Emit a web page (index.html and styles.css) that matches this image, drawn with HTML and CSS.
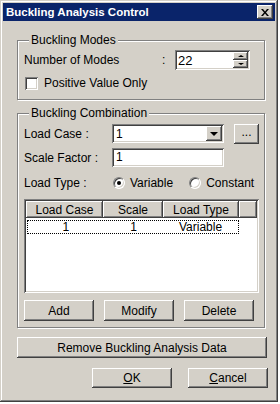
FILE: index.html
```html
<!DOCTYPE html>
<html>

<head>
    <title>Buckling Analysis Control</title>
    <link rel="stylesheet" href="styles.css">
</head>

<body>
    <div class="window">
        <div class="titlebar">
            <span class="title">Buckling Analysis Control</span>
            <div class="close raised">
                <svg width="8" height="7" viewBox="0 0 8 7">
                    <path d="M0 0h2l2 2.5l2-2.5h2l-3 3.5l3 3.5h-2l-2-2.5l-2 2.5h-2l3-3.5z" fill="#000"/>
                </svg>
            </div>
        </div>

        <fieldset class="group modes">
            <legend>Buckling Modes</legend>
            <div class="row modes-row">
                <span class="modes-label">Number of Modes</span>
                <span class="colon">:</span>
                <div class="spin sunken">
                    <span class="spin-value">22</span>
                    <div class="spin-btns">
                        <div class="spin-btn raised"><span class="tri-up"></span></div>
                        <div class="spin-btn raised"><span class="tri-down small"></span></div>
                    </div>
                </div>
            </div>
            <div class="check-row">
                <span class="checkbox sunken"></span>
                <span>Positive Value Only</span>
            </div>
        </fieldset>

        <fieldset class="group combination">
            <legend>Buckling Combination</legend>
            <div class="row">
                <span class="field-label">Load Case :</span>
                <div class="combo sunken">
                    <span class="combo-value">1</span>
                    <div class="combo-btn raised"><span class="tri-down"></span></div>
                </div>
                <div class="btn dots raised">...</div>
            </div>
            <div class="row gap5">
                <span class="field-label">Scale Factor :</span>
                <div class="edit sunken">1</div>
            </div>
            <div class="row type-row">
                <span class="field-label">Load Type :</span>
                <span class="radio checked"></span>
                <span class="radio-text">Variable</span>
                <span class="radio constant"></span>
                <span class="radio-text">Constant</span>
            </div>

            <div class="list sunken">
                <div class="list-head">
                    <div class="head-cell raised c1">Load Case</div>
                    <div class="head-cell raised c2">Scale</div>
                    <div class="head-cell raised c3">Load Type</div>
                    <div class="head-cell raised filler"></div>
                </div>
                <div class="list-row">
                    <span class="c1">1</span>
                    <span class="c2">1</span>
                    <span class="c3">Variable</span>
                </div>
            </div>

            <div class="action-row">
                <div class="btn raised">Add</div>
                <div class="btn raised">Modify</div>
                <div class="btn raised">Delete</div>
            </div>
        </fieldset>

        <div class="btn raised remove">Remove Buckling Analysis Data</div>

        <div class="footer">
            <div class="btn raised"><u>O</u>K</div>
            <div class="btn raised"><u>C</u>ancel</div>
        </div>
    </div>
</body>

</html>
```

FILE: styles.css
```css
* {
    box-sizing: border-box;
}
body {
    margin: 0;
    background: #fff;
    font-family: "Liberation Sans", Arial, sans-serif;
    font-size: 12px;
    color: #000;
}
.window {
    width: 278px;
    height: 402px;
    padding: 3px;
    background: #d4d0c8;
    box-shadow: inset -1px -1px #404040, inset 1px 1px #d4d0c8, inset -2px -2px #808080, inset 2px 2px #fff;
}
.raised {
    background: #d4d0c8;
    box-shadow: inset -1px -1px #404040, inset 1px 1px #fff, inset -2px -2px #808080, inset 2px 2px #d4d0c8;
}
.sunken {
    background: #fff;
    box-shadow: inset 1px 1px #808080, inset -1px -1px #fff, inset 2px 2px #404040, inset -2px -2px #d4d0c8;
}

/* title bar */
.titlebar {
    height: 18px;
    background: #0a246a;
    color: #fff;
    display: flex;
    align-items: center;
    justify-content: space-between;
    padding: 0 2px 0 3px;
}
.title {
    font-weight: bold;
    font-size: 11.5px;
}
.close {
    width: 16px;
    height: 14px;
    display: flex;
    align-items: center;
    justify-content: center;
}

/* group boxes */
.group {
    margin: 0 0 0 14px;
    padding: 0;
    width: 248px;
    border: 1px solid #808080;
    box-shadow: inset 1px 1px #fff, 1px 1px #fff;
}
.group legend {
    margin-left: 5px;
    padding: 0 2px;
    line-height: 14px;
    background: #d4d0c8;
}
.modes {
    margin-top: 12px;
    padding: 3px 5px 9px 6px;
}
.combination {
    margin-top: 6px;
    padding: 4px 5px 6px 6px;
}
.row {
    display: flex;
    align-items: center;
    height: 19px;
}
.gap5 {
    margin-top: 5px;
}

/* number of modes */
.modes-row {
    height: 20px;
}
.modes-label {
    width: 138px;
}
.colon {
    width: 13px;
}
.spin {
    width: 75px;
    height: 20px;
    display: flex;
    align-items: center;
    padding: 2px;
}
.spin-value {
    flex: 1;
    padding-left: 1px;
    font-size: 13px;
}
.spin-btns {
    display: flex;
    flex-direction: column;
    width: 15px;
    height: 16px;
}
.spin-btn {
    height: 8px;
    display: flex;
    align-items: center;
    justify-content: center;
}
.tri-up {
    border-left: 3px solid transparent;
    border-right: 3px solid transparent;
    border-bottom: 2px solid #000;
}
.tri-down {
    border-left: 4px solid transparent;
    border-right: 4px solid transparent;
    border-top: 4px solid #000;
}
.tri-down.small {
    border-left-width: 3px;
    border-right-width: 3px;
    border-top-width: 2px;
}
.check-row {
    display: flex;
    align-items: center;
    margin-top: 6px;
}
.checkbox {
    width: 13px;
    height: 13px;
    margin: 0 6px 0 1px;
}

/* combination rows */
.field-label {
    width: 88px;
    flex-shrink: 0;
}
.combo {
    width: 112px;
    height: 19px;
    display: flex;
    align-items: center;
    padding: 2px;
}
.combo-value {
    flex: 1;
    padding-left: 2px;
}
.combo-btn {
    width: 16px;
    height: 15px;
    display: flex;
    align-items: center;
    justify-content: center;
}
.edit {
    width: 112px;
    height: 19px;
    padding: 2px 4px;
    line-height: 15px;
}
.btn {
    display: flex;
    align-items: center;
    justify-content: center;
    height: 21px;
}
.dots {
    width: 25px;
    height: 20px;
    margin-left: 10px;
    padding-bottom: 3px;
}
.type-row {
    margin-top: 6px;
}
.radio {
    width: 12px;
    height: 12px;
    margin: 0 5px 0 1px;
    border-radius: 50%;
    border: 1px solid;
    border-color: #808080 #fff #fff #808080;
    background: #fff;
    box-shadow: inset 1px 1px #404040, inset -1px -1px #d4d0c8;
    display: flex;
    align-items: center;
    justify-content: center;
}
.radio.checked::after {
    content: "";
    width: 4px;
    height: 4px;
    border-radius: 50%;
    background: #000;
}
.radio.constant {
    margin-left: 16px;
}

/* list view */
.list {
    margin-top: 7px;
    height: 94px;
    padding: 2px;
}
.list-head {
    display: flex;
    height: 17px;
}
.head-cell {
    display: flex;
    align-items: center;
    justify-content: center;
    height: 17px;
}
.c1 {
    width: 77px;
}
.c2 {
    width: 60px;
}
.c3 {
    width: 76px;
}
.filler {
    flex: 1;
}
.list-row {
    display: flex;
    margin: 2px 0 0 1px;
    width: 212px;
    height: 14px;
    line-height: 12px;
    border: 1px dotted #000;
    color: #000;
}
.list-row span {
    text-align: center;
}
.action-row {
    display: flex;
    justify-content: space-between;
    margin-top: 7px;
    width: 230px;
}
.action-row .btn {
    width: 70px;
}

/* bottom buttons */
.remove {
    margin: 9px 0 0 14px;
    width: 250px;
}
.footer {
    display: flex;
    justify-content: flex-end;
    gap: 16px;
    margin-top: 10px;
    padding-right: 7px;
}
.footer .btn {
    width: 80px;
    height: 20px;
}
```
